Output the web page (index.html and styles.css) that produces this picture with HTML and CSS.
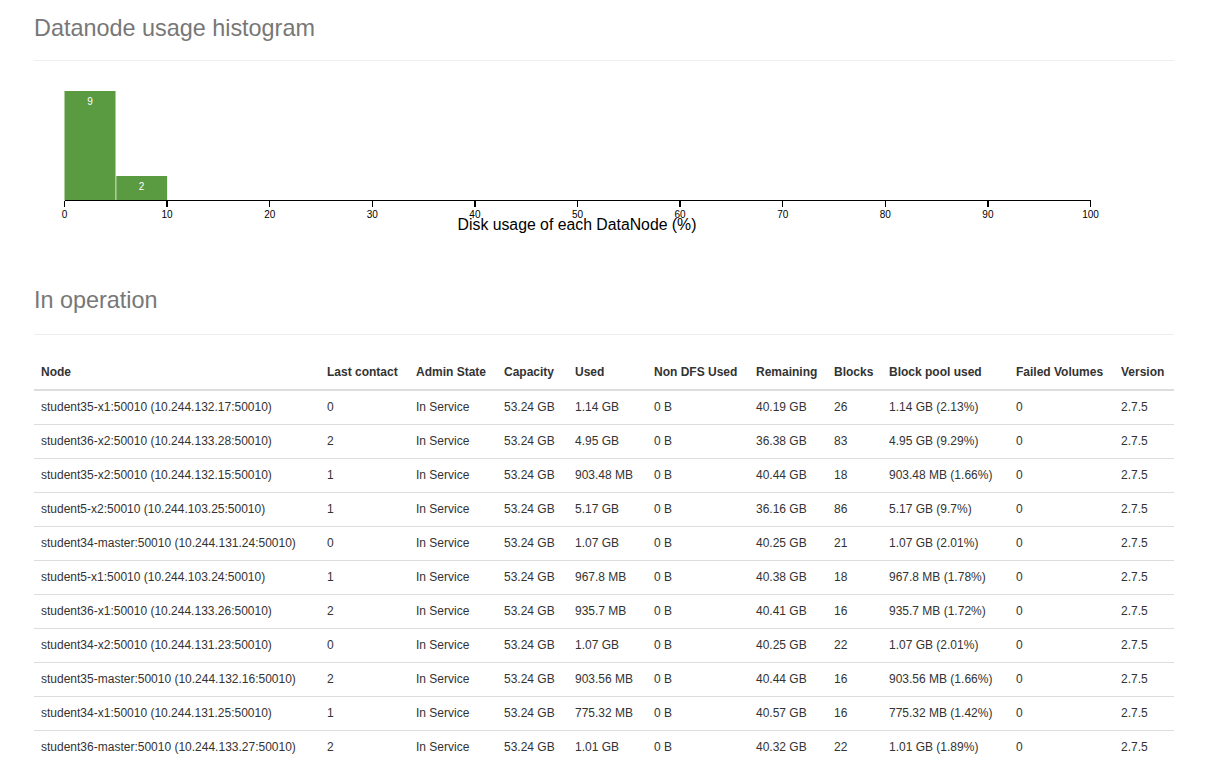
FILE: index.html
```html
<!DOCTYPE html>
<html>
<head>
<meta charset="utf-8">
<link rel="stylesheet" href="styles.css">
</head>
<body>
<div class="container">
  <div class="page-header first"><h1><small>Datanode usage histogram</small></h1></div>
  <svg class="histogram" width="1140" height="155" viewBox="0 0 1140 155">
    <g class="bars">
      <rect x="30.5" y="10" width="51" height="109.5"></rect>
      <rect x="82.3" y="95" width="50.8" height="24.5"></rect>
    </g>
    <text class="barlabel" x="56" y="23.5">9</text>
    <text class="barlabel" x="107.5" y="108.5">2</text>
    <line class="axis" x1="30.5" y1="119.5" x2="1056.5" y2="119.5"></line>
    <g class="ticks">
      <line x1="30.5" y1="119.5" x2="30.5" y2="125.5"></line>
      <line x1="133.1" y1="119.5" x2="133.1" y2="125.5"></line>
      <line x1="235.7" y1="119.5" x2="235.7" y2="125.5"></line>
      <line x1="338.3" y1="119.5" x2="338.3" y2="125.5"></line>
      <line x1="440.9" y1="119.5" x2="440.9" y2="125.5"></line>
      <line x1="543.5" y1="119.5" x2="543.5" y2="125.5"></line>
      <line x1="646.1" y1="119.5" x2="646.1" y2="125.5"></line>
      <line x1="748.7" y1="119.5" x2="748.7" y2="125.5"></line>
      <line x1="851.3" y1="119.5" x2="851.3" y2="125.5"></line>
      <line x1="953.9" y1="119.5" x2="953.9" y2="125.5"></line>
      <line x1="1056.5" y1="119.5" x2="1056.5" y2="125.5"></line>
    </g>
    <g class="ticklabels">
      <text x="30.5" y="136.5">0</text>
      <text x="133.1" y="136.5">10</text>
      <text x="235.7" y="136.5">20</text>
      <text x="338.3" y="136.5">30</text>
      <text x="440.9" y="136.5">40</text>
      <text x="543.5" y="136.5">50</text>
      <text x="646.1" y="136.5">60</text>
      <text x="748.7" y="136.5">70</text>
      <text x="851.3" y="136.5">80</text>
      <text x="953.9" y="136.5">90</text>
      <text x="1056.5" y="136.5">100</text>
    </g>
    <text class="axislabel" x="543" y="148.5">Disk usage of each DataNode (%)</text>
  </svg>

  <div class="page-header"><h1><small>In operation</small></h1></div>
  <table class="table">
    <colgroup>
      <col style="width:286px"><col style="width:89px"><col style="width:88px"><col style="width:71px">
      <col style="width:79px"><col style="width:102px"><col style="width:78px"><col style="width:55px">
      <col style="width:127px"><col style="width:105px"><col style="width:60px">
    </colgroup>
    <thead>
      <tr><th>Node</th><th>Last contact</th><th>Admin State</th><th>Capacity</th><th>Used</th><th>Non DFS Used</th><th>Remaining</th><th>Blocks</th><th>Block pool used</th><th>Failed Volumes</th><th>Version</th></tr>
    </thead>
    <tbody>
      <tr><td>student35-x1:50010 (10.244.132.17:50010)</td><td>0</td><td>In Service</td><td>53.24 GB</td><td>1.14 GB</td><td>0 B</td><td>40.19 GB</td><td>26</td><td>1.14 GB (2.13%)</td><td>0</td><td>2.7.5</td></tr>
      <tr><td>student36-x2:50010 (10.244.133.28:50010)</td><td>2</td><td>In Service</td><td>53.24 GB</td><td>4.95 GB</td><td>0 B</td><td>36.38 GB</td><td>83</td><td>4.95 GB (9.29%)</td><td>0</td><td>2.7.5</td></tr>
      <tr><td>student35-x2:50010 (10.244.132.15:50010)</td><td>1</td><td>In Service</td><td>53.24 GB</td><td>903.48 MB</td><td>0 B</td><td>40.44 GB</td><td>18</td><td>903.48 MB (1.66%)</td><td>0</td><td>2.7.5</td></tr>
      <tr><td>student5-x2:50010 (10.244.103.25:50010)</td><td>1</td><td>In Service</td><td>53.24 GB</td><td>5.17 GB</td><td>0 B</td><td>36.16 GB</td><td>86</td><td>5.17 GB (9.7%)</td><td>0</td><td>2.7.5</td></tr>
      <tr><td>student34-master:50010 (10.244.131.24:50010)</td><td>0</td><td>In Service</td><td>53.24 GB</td><td>1.07 GB</td><td>0 B</td><td>40.25 GB</td><td>21</td><td>1.07 GB (2.01%)</td><td>0</td><td>2.7.5</td></tr>
      <tr><td>student5-x1:50010 (10.244.103.24:50010)</td><td>1</td><td>In Service</td><td>53.24 GB</td><td>967.8 MB</td><td>0 B</td><td>40.38 GB</td><td>18</td><td>967.8 MB (1.78%)</td><td>0</td><td>2.7.5</td></tr>
      <tr><td>student36-x1:50010 (10.244.133.26:50010)</td><td>2</td><td>In Service</td><td>53.24 GB</td><td>935.7 MB</td><td>0 B</td><td>40.41 GB</td><td>16</td><td>935.7 MB (1.72%)</td><td>0</td><td>2.7.5</td></tr>
      <tr><td>student34-x2:50010 (10.244.131.23:50010)</td><td>0</td><td>In Service</td><td>53.24 GB</td><td>1.07 GB</td><td>0 B</td><td>40.25 GB</td><td>22</td><td>1.07 GB (2.01%)</td><td>0</td><td>2.7.5</td></tr>
      <tr><td>student35-master:50010 (10.244.132.16:50010)</td><td>2</td><td>In Service</td><td>53.24 GB</td><td>903.56 MB</td><td>0 B</td><td>40.44 GB</td><td>16</td><td>903.56 MB (1.66%)</td><td>0</td><td>2.7.5</td></tr>
      <tr><td>student34-x1:50010 (10.244.131.25:50010)</td><td>1</td><td>In Service</td><td>53.24 GB</td><td>775.32 MB</td><td>0 B</td><td>40.57 GB</td><td>16</td><td>775.32 MB (1.42%)</td><td>0</td><td>2.7.5</td></tr>
      <tr><td>student36-master:50010 (10.244.133.27:50010)</td><td>2</td><td>In Service</td><td>53.24 GB</td><td>1.01 GB</td><td>0 B</td><td>40.32 GB</td><td>22</td><td>1.01 GB (1.89%)</td><td>0</td><td>2.7.5</td></tr>
    </tbody>
  </table>
</div>
</body>
</html>
```

FILE: styles.css
```css
html, body {
  margin: 0;
  padding: 0;
  background: #fff;
}
body {
  font-family: "Liberation Sans", Arial, sans-serif;
  font-size: 12px;
  line-height: 1.42857;
  color: #333;
}
.container {
  width: 1140px;
  margin-left: 34px;
}
.page-header {
  margin: 40px 0 21px;
  padding-bottom: 9px;
  border-bottom: 1px solid #eee;
}
.page-header.first {
  margin-top: 0;
  margin-bottom: 20px;
}
.page-header h1 {
  margin: 0 0 10px;
  font-size: 36px;
  line-height: 1.1;
  font-weight: 500;
}
.page-header.first h1 {
  margin-top: 4px;
  margin-bottom: 7px;
}
.page-header h1 small {
  font-size: 65%;
  color: #777;
  font-weight: 400;
}
.histogram {
  display: block;
  font-family: "Liberation Sans", Arial, sans-serif;
}
.bars rect {
  fill: #5a9a41;
}
.barlabel {
  fill: #fff;
  font-size: 10px;
  text-anchor: middle;
}
.axis, .ticks line {
  stroke: #000;
  stroke-width: 1.3;
  shape-rendering: crispEdges;
}
.ticklabels text {
  font-size: 10px;
  text-anchor: middle;
  fill: #000;
}
.axislabel {
  font-size: 15.8px;
  text-anchor: middle;
  fill: #000;
}
.table {
  width: 1140px;
  table-layout: fixed;
  border-collapse: collapse;
  border-spacing: 0;
  margin-bottom: 20px;
}
.table th, .table td {
  padding: 8px 8px 8px 7px;
  text-align: left;
  vertical-align: top;
  white-space: nowrap;
  line-height: 17px;
}
.table th {
  font-weight: bold;
  border-bottom: 2px solid #ddd;
  vertical-align: bottom;
}
.table td {
  border-top: 1px solid #ddd;
}
.table tbody tr:first-child td {
  border-top: 0;
}
```
